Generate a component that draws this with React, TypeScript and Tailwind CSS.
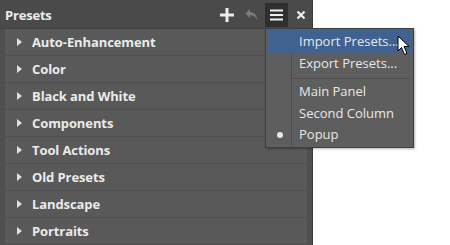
import React from "react";

const groups = [
  "Auto-Enhancement",
  "Color",
  "Black and White",
  "Components",
  "Tool Actions",
  "Old Presets",
  "Landscape",
  "Portraits",
];

function Caret() {
  return (
    <svg width="5" height="8" viewBox="0 0 5 8" className="shrink-0">
      <path d="M0 0 L5 4 L0 8 Z" fill="#e0e0e0" />
    </svg>
  );
}

export default function App() {
  return (
    <div
      className="relative w-[450px] h-[245px] bg-white overflow-hidden"
      style={{ fontFamily: "'Open Sans', 'Liberation Sans', sans-serif" }}
    >
      {/* panel */}
      <div className="w-[313px] h-[245px] bg-[#4f4f4f] border-r border-[#3c3c3c] flex flex-col">
        <div className="h-[29px] flex items-center pl-[5px] pr-[6px] bg-[#4a4a4a] border-b border-[#404040]">
          <span className="text-[13px] font-bold text-[#ececec] tracking-[-0.2px] translate-y-[2px]">
            Presets
          </span>
          <div className="ml-auto flex items-center h-full pt-[1px]">
            <svg width="14" height="14" viewBox="0 0 14 14" className="mr-[11px]">
              <rect x="5.5" y="0" width="3" height="14" fill="#ededed" />
              <rect x="0" y="5.5" width="14" height="3" fill="#ededed" />
            </svg>
            <svg width="14" height="14" viewBox="0 0 14 14" className="mr-[6px]">
              <path
                d="M5 1 L0.5 5.5 L5 10 L5 7.3 C8.5 7.3 10.5 8.5 12.5 12.5 C12 8 9.5 4.3 5 4 Z"
                fill="#7c7c7c"
              />
            </svg>
            <div className="w-[23px] h-[24px] bg-[#2f2f2f] flex items-center justify-center">
              <svg width="13" height="12" viewBox="0 0 13 12">
                <rect x="0" y="0.5" width="13" height="2" fill="#ededed" />
                <rect x="0" y="5" width="13" height="2" fill="#ededed" />
                <rect x="0" y="9.5" width="13" height="2" fill="#ededed" />
              </svg>
            </div>
            <svg width="10" height="10" viewBox="0 0 10 10" className="ml-[8px]">
              <path d="M1.5 1.5 L8.5 8.5 M8.5 1.5 L1.5 8.5" stroke="#ededed" strokeWidth="2.2" />
            </svg>
          </div>
        </div>
        <div className="flex flex-col gap-px pl-[5px] pr-[5px]">
          {groups.map((g) => (
            <div
              key={g}
              className="h-[26px] bg-[#595959] flex items-center pl-[12px] gap-[10px]"
            >
              <Caret />
              <span className="text-[13px] font-bold text-[#ebebeb] tracking-[-0.1px] translate-y-[1px]">
                {g}
              </span>
            </div>
          ))}
        </div>
      </div>

      {/* dropdown menu */}
      <div className="absolute left-[265px] top-[28px] w-[149px] h-[120px] bg-[#5e5e5e] border border-[#3e3e3e] shadow-[1px_1px_2px_rgba(0,0,0,0.3)] pt-[1px] text-[13px] text-[#e8e8e8]">
        <div className="absolute left-[25px] top-0 bottom-0 w-px bg-[#4c4c4c]" />
        <div className="relative mx-[1px] h-[23px] bg-[#3f6290] flex items-center pl-[32px]">
          Import Presets...
        </div>
        <div className="relative h-[22px] flex items-center pl-[33px]">Export Presets...</div>
        <div className="relative h-[6px] flex items-center pl-[26px] pr-[3px]">
          <div className="h-px w-full bg-[#4c4c4c]" />
        </div>
        <div className="relative h-[22px] flex items-center pl-[33px]">Main Panel</div>
        <div className="relative h-[21px] flex items-center pl-[33px]">Second Column</div>
        <div className="relative h-[22px] flex items-center pl-[33px]">
          <span className="absolute left-[11px] top-[8px] w-[6px] h-[6px] rounded-full bg-[#e8e8e8]" />
          Popup
        </div>
      </div>

      {/* cursor */}
      <svg
        width="14"
        height="22"
        viewBox="0 0 14 22"
        className="absolute left-[397px] top-[35px]"
      >
        <path
          d="M1 1 L1 16 L4.5 12.5 L7.5 19.5 L10 18.5 L7 11.5 L12 11.5 Z"
          fill="#ffffff"
          stroke="#000000"
          strokeWidth="1"
          strokeLinejoin="round"
        />
      </svg>
    </div>
  );
}
